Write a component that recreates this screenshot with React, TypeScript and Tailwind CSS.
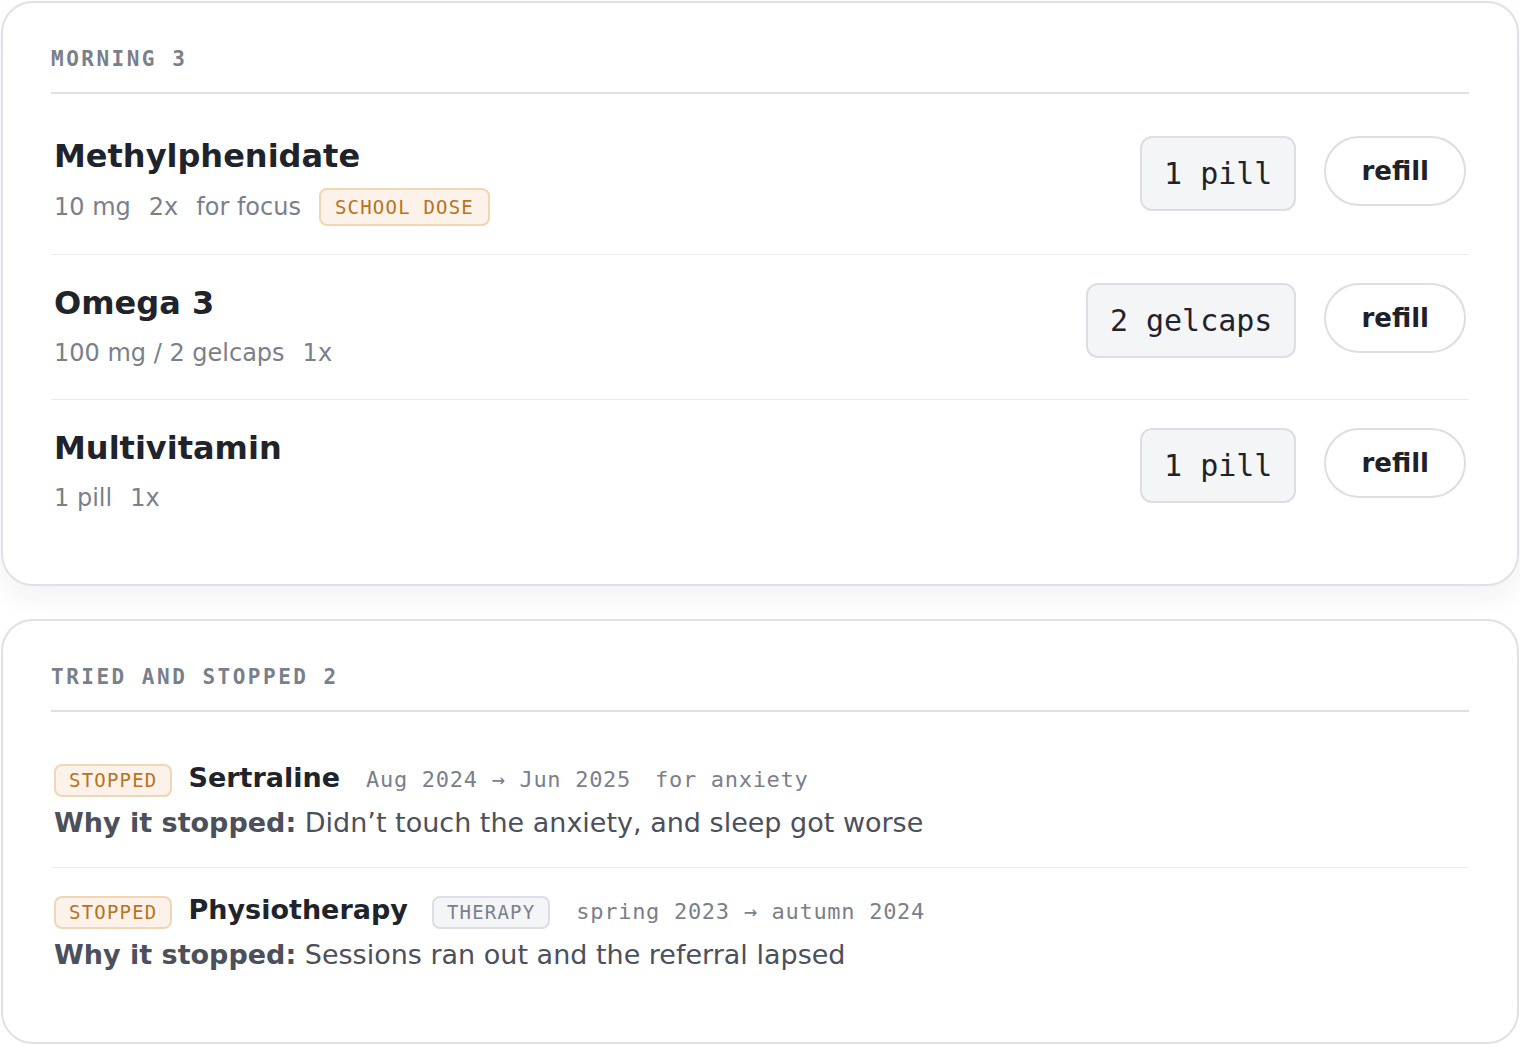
import React from 'react';

type Med = {
  name: string;
  meta: string[];
  tag?: string;
  dose: string;
};

type Stopped = {
  name: string;
  kind?: string;
  span: string;
  purpose?: string;
  why: string;
};

const morning: Med[] = [
  { name: 'Methylphenidate', meta: ['10 mg', '2x', 'for focus'], tag: 'SCHOOL DOSE', dose: '1 pill' },
  { name: 'Omega 3', meta: ['100 mg / 2 gelcaps', '1x'], dose: '2 gelcaps' },
  { name: 'Multivitamin', meta: ['1 pill', '1x'], dose: '1 pill' },
];

const stopped: Stopped[] = [
  {
    name: 'Sertraline',
    span: 'Aug 2024 → Jun 2025',
    purpose: 'for anxiety',
    why: 'Didn’t touch the anxiety, and sleep got worse',
  },
  {
    name: 'Physiotherapy',
    kind: 'THERAPY',
    span: 'spring 2023 → autumn 2024',
    why: 'Sessions ran out and the referral lapsed',
  },
];

const SectionHeader = ({ title }: { title: string }) => (
  <div className="border-b-2 border-[#dfdfe9] pb-[18px]">
    <h2 className="font-['DejaVu_Sans_Mono',monospace] text-[21px] leading-[30px] font-bold tracking-[2.5px] text-[#7a7f8c]">
      {title}
    </h2>
  </div>
);

const MedRow = ({ med, last }: { med: Med; last: boolean }) => (
  <div className={`flex items-start justify-between px-[3px] pt-7 pb-7 ${last ? '' : 'border-b border-[#ebebf1]'}`}>
    <div>
      <div className="text-[32px] leading-[40px] font-bold text-[#1f232b]">{med.name}</div>
      <div className="mt-3 flex items-center gap-[18px] text-[24px] leading-[36px] text-[#7b7f8c]">
        {med.meta.map((m) => (
          <span key={m}>{m}</span>
        ))}
        {med.tag && (
          <span className="flex h-[38px] items-center rounded-[8px] border-2 border-[#efd6b7] bg-[#fcf2e9] px-[14px] font-['DejaVu_Sans_Mono',monospace] text-[19px] tracking-[1.2px] text-[#b8731c]">
            {med.tag}
          </span>
        )}
      </div>
    </div>
    <div className="flex items-start gap-[28px]">
      <div className="flex h-[75px] items-center rounded-[12px] border-2 border-[#dcdde6] bg-[#f4f5f7] px-[22px] font-['DejaVu_Sans_Mono',monospace] text-[30px] text-[#1f232b]">
        {med.dose}
      </div>
      <button className="flex h-[70px] items-center rounded-full border-2 border-[#dddde8] bg-white px-[35px] text-[26px] font-bold text-[#1e2129]">
        refill
      </button>
    </div>
  </div>
);

const StoppedRow = ({ item, last }: { item: Stopped; last: boolean }) => (
  <div className={`px-[3px] pt-7 pb-[26px] ${last ? '' : 'border-b border-[#ebebf1]'}`}>
    <div className="flex h-[34px] items-baseline">
      <span className="flex h-[33px] items-center rounded-[8px] border-2 border-[#efd6b7] bg-[#fcf2e9] px-[13px] font-['DejaVu_Sans_Mono',monospace] text-[19px] tracking-[1.2px] text-[#b8731c]">
        STOPPED
      </span>
      <span className="ml-4 text-[27px] leading-[28px] font-bold text-[#1f232b]">{item.name}</span>
      {item.kind && (
        <span className="ml-6 flex h-[33px] items-center rounded-[8px] border-2 border-[#dcdde6] bg-[#f4f5f7] px-[13px] font-['DejaVu_Sans_Mono',monospace] text-[19px] tracking-[1.2px] text-[#7b7f8c]">
          {item.kind}
        </span>
      )}
      <span className="ml-[26px] font-['DejaVu_Sans_Mono',monospace] text-[22px] leading-[28px] tracking-[0.7px] text-[#7b7f8c]">
        {item.span}
      </span>
      {item.purpose && (
        <span className="ml-6 font-['DejaVu_Sans_Mono',monospace] text-[22px] leading-[28px] tracking-[0.7px] text-[#7b7f8c]">
          {item.purpose}
        </span>
      )}
    </div>
    <p className="mt-[7px] text-[27px] leading-[36px] text-[#4b505c]">
      <span className="font-bold">Why it stopped:</span> {item.why}
    </p>
  </div>
);

export default function App() {
  return (
    <div className="min-h-screen bg-white px-px pt-px pb-10 font-['DejaVu_Sans',sans-serif]">
      <section className="rounded-[32px] border-2 border-[#e0e0eb] bg-white px-12 pt-[41px] pb-[40px] shadow-[0_12px_28px_rgba(30,30,60,0.06)]">
        <SectionHeader title="MORNING 3" />
        <div className="mt-[14px]">
          {morning.map((m, i) => (
            <MedRow key={m.name} med={m} last={i === morning.length - 1} />
          ))}
        </div>
      </section>

      <section className="mt-[33px] rounded-[32px] border-2 border-[#e0e0eb] bg-white px-12 pt-[41px] pb-[43px]">
        <SectionHeader title="TRIED AND STOPPED 2" />
        <div className="mt-6">
          {stopped.map((s, i) => (
            <StoppedRow key={s.name} item={s} last={i === stopped.length - 1} />
          ))}
        </div>
      </section>
    </div>
  );
}
